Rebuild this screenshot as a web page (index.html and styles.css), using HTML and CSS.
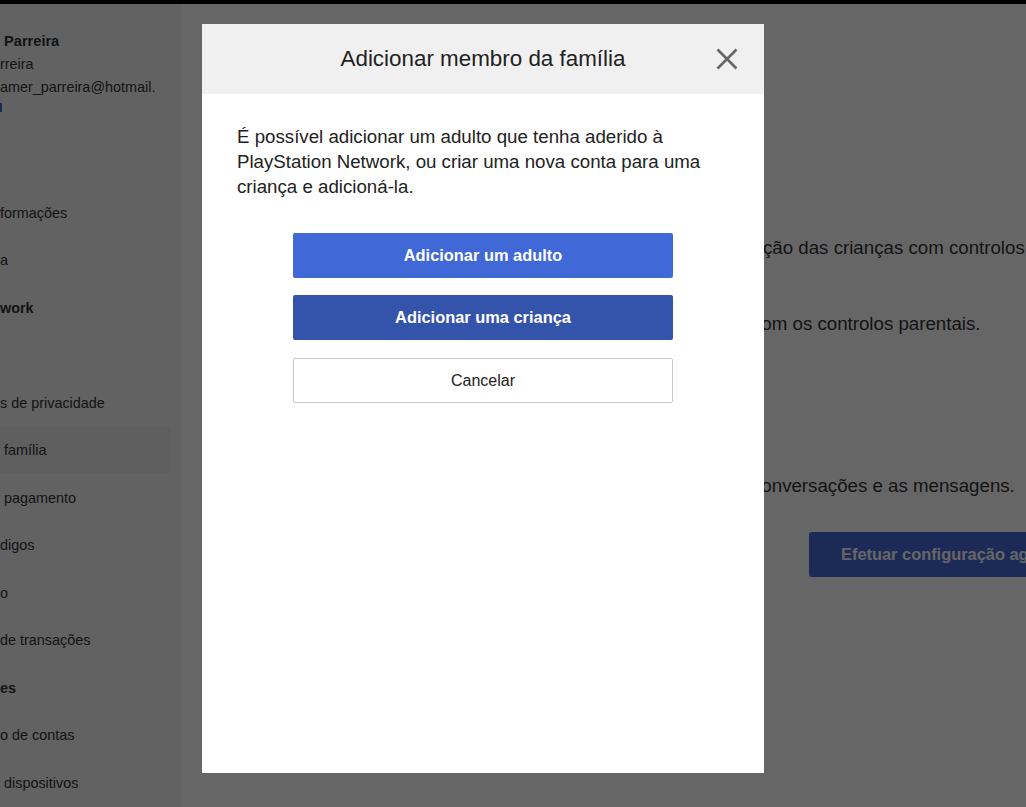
FILE: index.html
```html
<!DOCTYPE html>
<html lang="pt">
<head>
<meta charset="utf-8">
<title>Adicionar membro da família</title>
<link rel="stylesheet" href="styles.css">
</head>
<body>
<div class="topbar"></div>
<div class="page">
  <aside class="sidebar">
    <div class="profile">
      <div class="name">&nbsp;Parreira</div>
      <div class="line">rreira</div>
      <div class="line">amer_parreira@hotmail.</div>
      <div class="link"><span class="link-mark"></span></div>
    </div>
    <ul class="menu">
      <li>formações</li>
      <li>a</li>
      <li class="head">work</li>
      <li></li>
      <li>s de privacidade</li>
      <li class="active">&nbsp;família</li>
      <li>&nbsp;pagamento</li>
      <li>digos</li>
      <li>o</li>
      <li>de transações</li>
      <li class="head">es</li>
      <li>o de contas</li>
      <li>&nbsp;dispositivos</li>
    </ul>
  </aside>
  <main class="content">
    <p class="para">ção das crianças com controlos</p>
    <p class="para p2 cut">com os controlos parentais.</p>
    <p class="para p3 cut">conversações e as mensagens.</p>
    <button class="setup">Efetuar configuração agora</button>
  </main>
</div>

<div class="overlay"></div>

<div class="modal" role="dialog">
  <div class="modal-header">
    <h2 class="modal-title">Adicionar membro da família</h2>
    <button class="close" aria-label="Fechar">
      <svg width="24" height="24" viewBox="0 0 24 24"><path d="M2.5 2.5 L21.5 21.5 M21.5 2.5 L2.5 21.5" stroke="#666" stroke-width="2.6" fill="none"/></svg>
    </button>
  </div>
  <div class="modal-body">
    <p class="intro">É possível adicionar um adulto que tenha aderido à PlayStation Network, ou criar uma nova conta para uma criança e adicioná-la.</p>
    <div class="actions">
      <button class="btn btn-adult">Adicionar um adulto</button>
      <button class="btn btn-child">Adicionar uma criança</button>
      <button class="btn btn-cancel">Cancelar</button>
    </div>
  </div>
</div>
</body>
</html>
```

FILE: styles.css
```css
* { box-sizing: border-box; }
html, body {
  margin: 0;
  padding: 0;
  height: 100%;
  overflow: hidden;
}
body {
  font-family: "Liberation Sans", Arial, sans-serif;
  background: #fff;
  color: #333;
}
.topbar {
  height: 4px;
  background: #000;
  position: relative;
  z-index: 20;
}
.page {
  display: flex;
  height: 803px;
}
.sidebar {
  width: 181px;
  flex: none;
  background: #f5f5f5;
  font-size: 14.4px;
  color: #333;
  white-space: nowrap;
  overflow: hidden;
}
.profile {
  padding-top: 25.5px;
  line-height: 23px;
}
.name {
  font-weight: bold;
  font-size: 14.6px;
}
.link {
  height: 20px;
  padding-top: 4px;
}
.link-mark {
  display: block;
  width: 2px;
  height: 9px;
  background: #2f6fd0;
}
.menu {
  list-style: none;
  margin: 0;
  padding: 0;
  margin-top: 71px;
}
.menu li {
  height: 46px;
  margin-bottom: 1.5px;
  line-height: 46px;
  width: 171px;
}
.menu li.head { font-weight: bold; }
.menu li.active { background: #eeeeee; }

.content {
  flex: 1;
  padding-top: 232px;
  padding-left: 582px;
  white-space: nowrap;
  overflow: hidden;
  font-size: 18.7px;
  color: #333;
}
.para {
  margin: 0;
  line-height: 24px;
}
.cut { margin-left: -11px; }
.p2 { margin-top: 52px; }
.p3 { margin-top: 138px; }
.setup {
  margin-top: 34px;
  margin-left: 46px;
  height: 45px;
  padding: 0 32px;
  border: none;
  border-radius: 3px;
  background: #4469da;
  color: #fff;
  font-family: "Liberation Sans", Arial, sans-serif;
  font-weight: bold;
  font-size: 16.4px;
  white-space: nowrap;
}

.overlay {
  position: fixed;
  inset: 4px 0 0 0;
  background: rgba(0, 0, 0, 0.6);
  z-index: 10;
}

.modal {
  position: fixed;
  left: 202px;
  top: 24px;
  width: 562px;
  height: 749px;
  background: #fff;
  z-index: 30;
  display: flex;
  flex-direction: column;
}
.modal-header {
  position: relative;
  height: 70px;
  background: #f0f0f0;
  display: flex;
  align-items: center;
  justify-content: center;
}
.modal-title {
  margin: 0;
  font-weight: normal;
  font-size: 22.4px;
  color: #222;
}
.close {
  position: absolute;
  right: 25px;
  top: 23px;
  width: 24px;
  height: 24px;
  padding: 0;
  border: none;
  background: transparent;
  display: flex;
}
.modal-body {
  padding: 30px 35px;
}
.intro {
  margin: 0;
  font-size: 18.7px;
  line-height: 25px;
  color: #222;
}
.actions {
  width: 380px;
  margin: 34px auto 0;
  display: flex;
  flex-direction: column;
  gap: 17px;
}
.btn {
  height: 45px;
  border-radius: 2px;
  font-family: "Liberation Sans", Arial, sans-serif;
  font-size: 16.4px;
  cursor: pointer;
}
.btn-adult {
  background: #4068d6;
  border: none;
  color: #fff;
  font-weight: bold;
}
.btn-child {
  background: #3453ab;
  border: none;
  color: #fff;
  font-weight: bold;
}
.btn-cancel {
  margin-top: 1px;
  background: #fff;
  border: 1px solid #c8c8c8;
  color: #222;
  font-size: 16px;
}
```
